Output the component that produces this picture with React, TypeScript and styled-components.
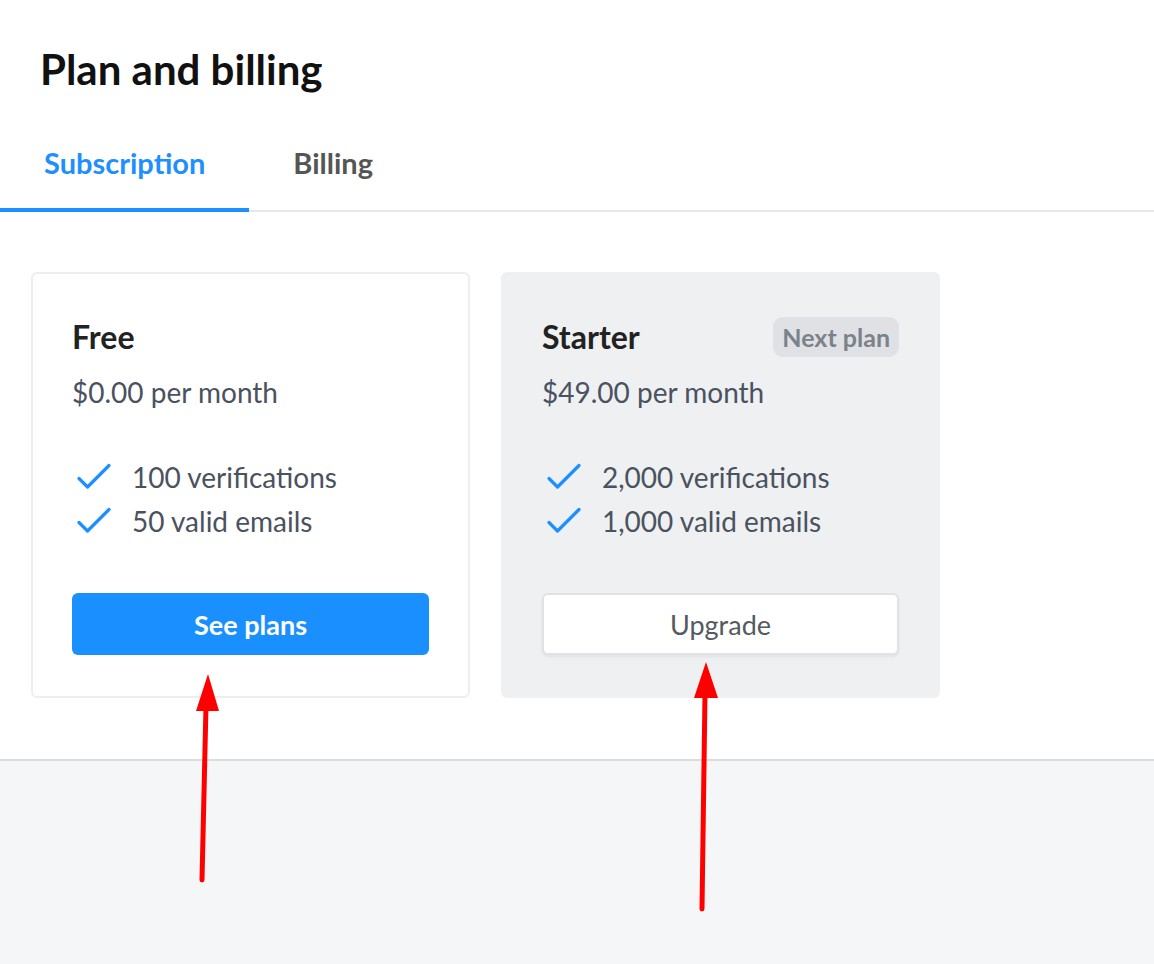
import styled, { createGlobalStyle } from "styled-components";

const GlobalStyle = createGlobalStyle`
    html, body {
        margin: 0;
        padding: 0;
        background-color: #f5f6f8;
        font-family: Lato, "Noto Sans", "Liberation Sans", sans-serif;
    }
    * {
        box-sizing: border-box;
    }
`;

const Page = styled.div`
    position: relative;
    min-height: 964px;
`;

const Header = styled.section`
    background-color: #ffffff;
    padding: 46px 0 61px;
    border-bottom: 2px solid #dcdddf;
`;

const Title = styled.h1`
    margin: 0 0 0 40px;
    font-size: 42px;
    line-height: 46px;
    font-weight: 700;
    color: #111111;
`;

const Tabs = styled.nav`
    display: flex;
    margin-top: 54px;
    border-bottom: 2px solid #e8e8e8;
`;

const Tab = styled.button<{ $active?: boolean }>`
    font-family: inherit;
    font-size: 29px;
    line-height: 1.2;
    font-weight: 700;
    background: none;
    border: none;
    cursor: pointer;
    padding: 0 44px 27px;
    margin-bottom: -2px;
    color: ${({ $active }) => ($active ? "#1e8fff" : "#555555")};
    border-bottom: 4px solid ${({ $active }) => ($active ? "#1e8fff" : "transparent")};
`;

const Plans = styled.div`
    display: flex;
    gap: 31px;
    padding: 60px 0 0 31px;
`;

const Card = styled.div<{ $muted?: boolean }>`
    width: 439px;
    padding: 43px 39px 41px;
    border-radius: 6px;
    border: 2px solid ${({ $muted }) => ($muted ? "#eef0f2" : "#eeeeee")};
    background-color: ${({ $muted }) => ($muted ? "#eef0f2" : "#ffffff")};
`;

const CardHead = styled.div`
    display: flex;
    align-items: center;
    justify-content: space-between;
    height: 40px;
`;

const PlanName = styled.h2`
    margin: 0;
    font-size: 32px;
    line-height: 1.2;
    font-weight: 700;
    color: #222222;
`;

const Badge = styled.span`
    display: inline-flex;
    align-items: center;
    height: 40px;
    padding: 0 9px;
    border-radius: 10px;
    background-color: #dfe1e4;
    color: #7b828b;
    font-size: 25px;
    font-weight: 700;
`;

const Price = styled.p`
    margin: 19px 0 0;
    font-size: 28px;
    line-height: 1.2;
    color: #4a5260;
`;

const Features = styled.ul`
    list-style: none;
    margin: 46px 0 0;
    padding: 0;
`;

const Feature = styled.li`
    display: flex;
    align-items: center;
    gap: 20px;
    height: 44px;
    font-size: 28px;
    color: #4a5260;
`;

const Button = styled.button<{ $primary?: boolean }>`
    display: block;
    width: 100%;
    height: 62px;
    margin-top: 50px;
    border-radius: 6px;
    font-family: inherit;
    font-size: 27px;
    cursor: pointer;
    font-weight: ${({ $primary }) => ($primary ? 700 : 400)};
    color: ${({ $primary }) => ($primary ? "#ffffff" : "#555a60")};
    background-color: ${({ $primary }) => ($primary ? "#1a8fff" : "#ffffff")};
    border: ${({ $primary }) => ($primary ? "none" : "2px solid #e1e2e5")};
    box-shadow: ${({ $primary }) => ($primary ? "none" : "0 2px 3px rgba(0, 0, 0, 0.06)")};
`;

const Annotations = styled.svg`
    position: absolute;
    top: 0;
    left: 0;
    pointer-events: none;
`;

function Check() {
    return (
        <svg width="40" height="28" viewBox="0 0 40 28" fill="none">
            <path
                d="M7 15.5 L15.5 24 L37 2.5"
                stroke="#1e8fff"
                strokeWidth="3.2"
                strokeLinecap="round"
                strokeLinejoin="round"
            />
        </svg>
    );
}

const plans = [
    {
        name: "Free",
        price: "$0.00 per month",
        features: ["100 verifications", "50 valid emails"],
        action: "See plans",
        current: true,
    },
    {
        name: "Starter",
        price: "$49.00 per month",
        features: ["2,000 verifications", "1,000 valid emails"],
        action: "Upgrade",
        current: false,
    },
];

export default function App() {
    return (
        <Page>
            <GlobalStyle />
            <Header>
                <Title>Plan and billing</Title>
                <Tabs>
                    <Tab $active>Subscription</Tab>
                    <Tab>Billing</Tab>
                </Tabs>
                <Plans>
                    {plans.map((plan) => (
                        <Card key={plan.name} $muted={!plan.current}>
                            <CardHead>
                                <PlanName>{plan.name}</PlanName>
                                {!plan.current && <Badge>Next plan</Badge>}
                            </CardHead>
                            <Price>{plan.price}</Price>
                            <Features>
                                {plan.features.map((f) => (
                                    <Feature key={f}>
                                        <Check />
                                        {f}
                                    </Feature>
                                ))}
                            </Features>
                            <Button $primary={plan.current}>{plan.action}</Button>
                        </Card>
                    ))}
                </Plans>
            </Header>
            <Annotations width="1154" height="964" viewBox="0 0 1154 964">
                <g stroke="#ff0000" strokeWidth="5" strokeLinecap="round">
                    <line x1="202" y1="880" x2="206" y2="706" />
                    <line x1="702" y1="909" x2="705" y2="694" />
                </g>
                <g fill="#ff0000">
                    <polygon points="208,674 196,711 219,711" />
                    <polygon points="706,662 694,698 718,698" />
                </g>
            </Annotations>
        </Page>
    );
}
